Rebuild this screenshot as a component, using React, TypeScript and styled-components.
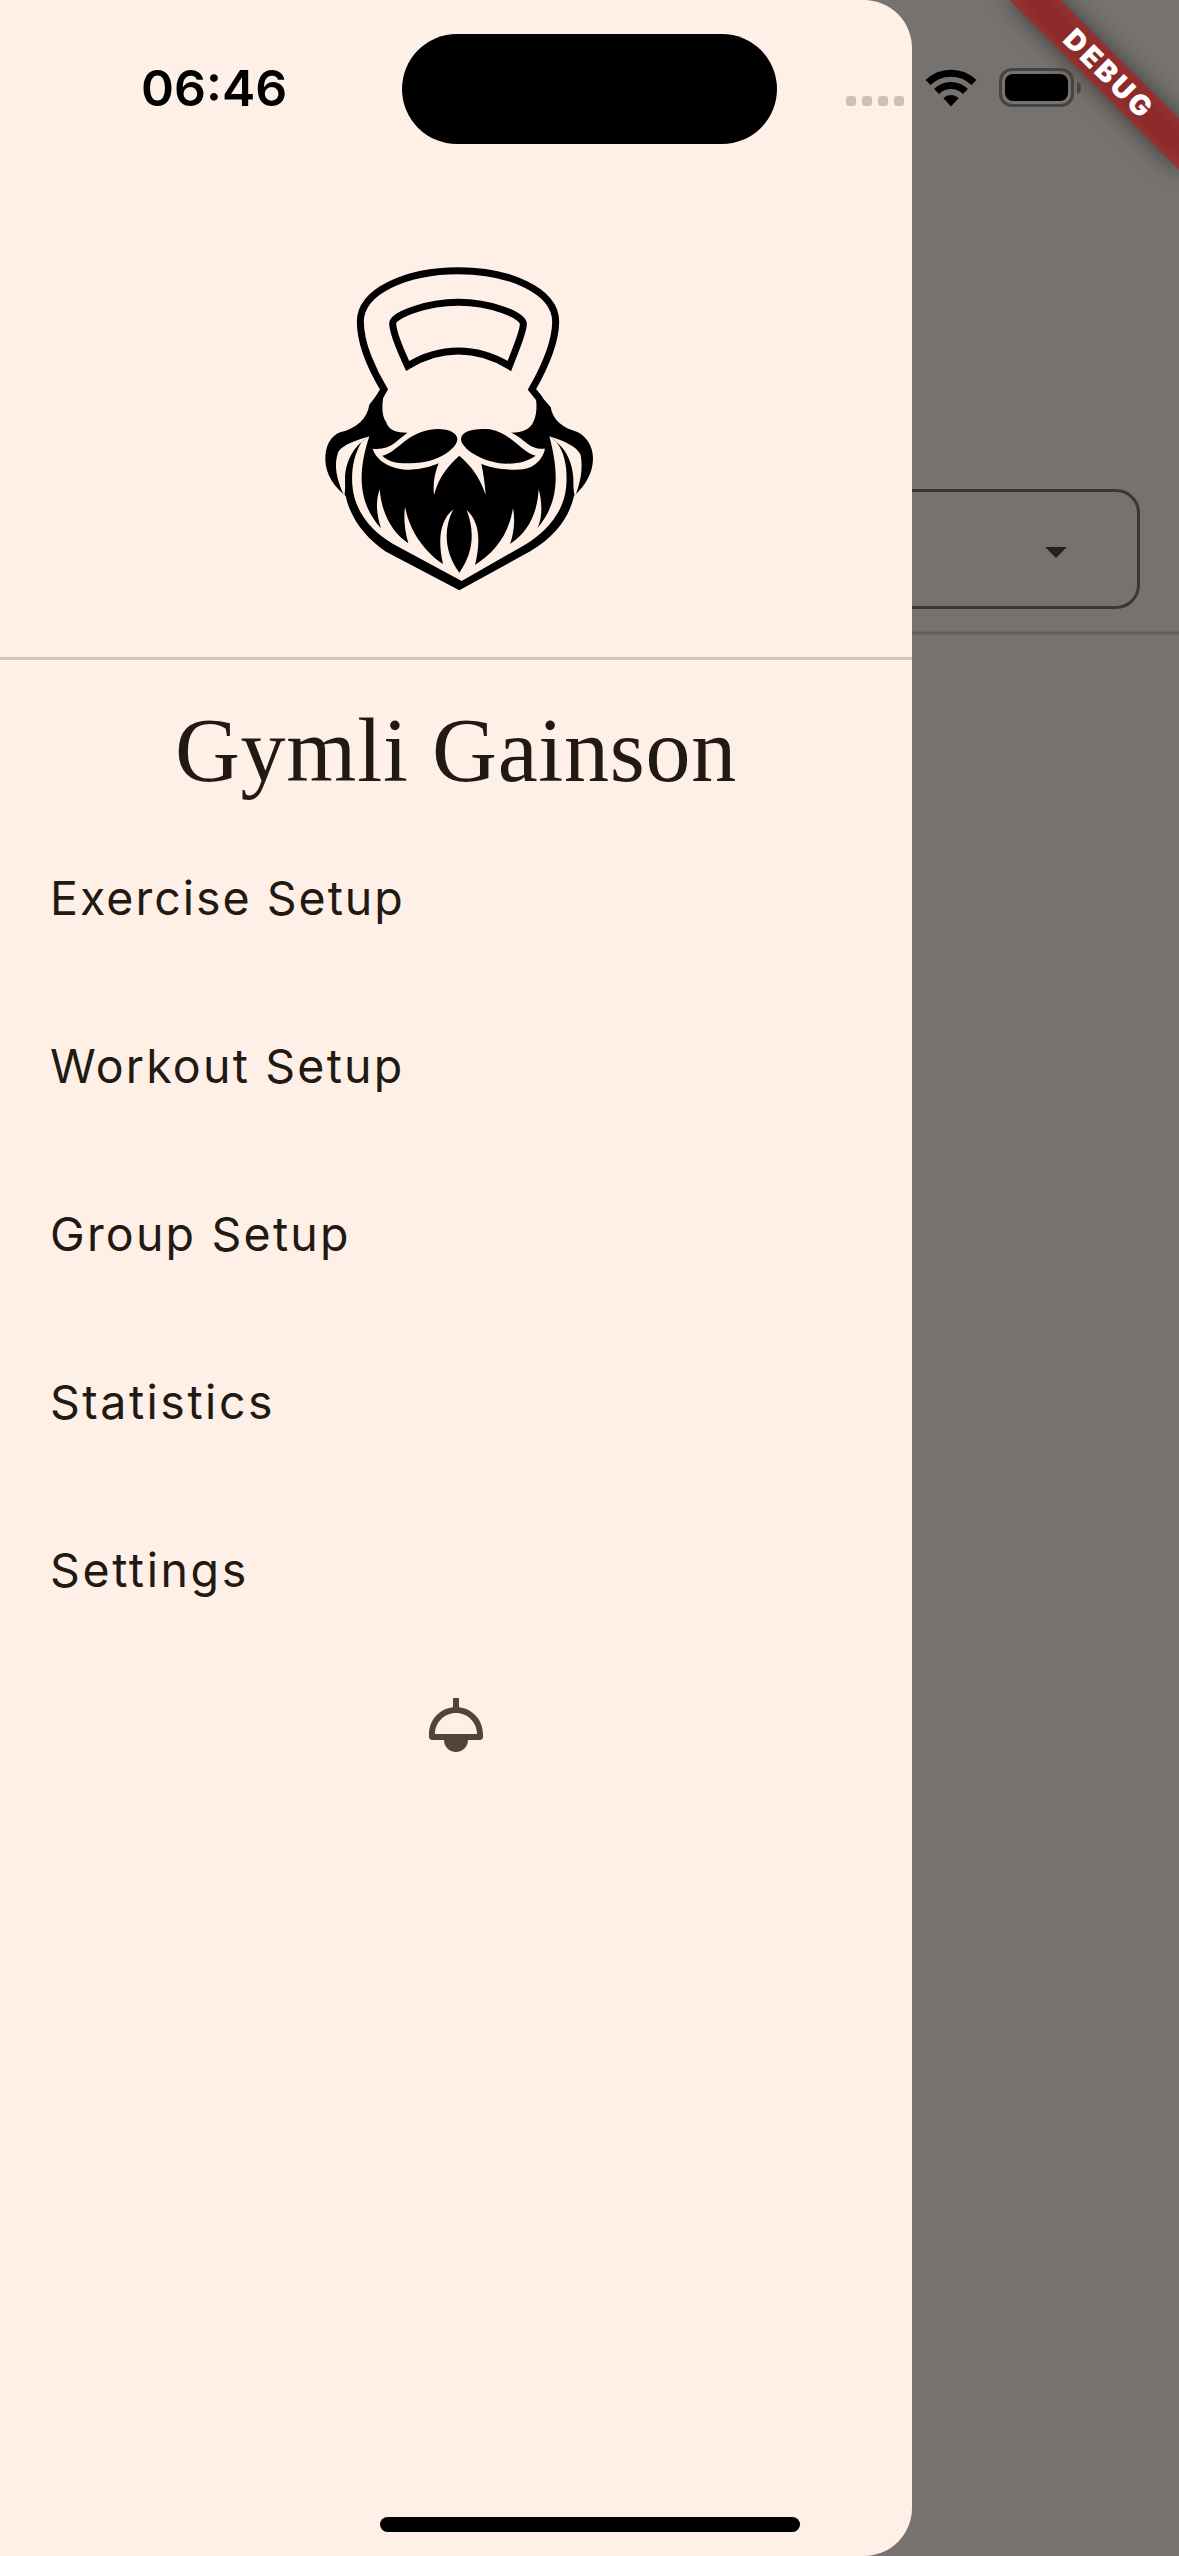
import React from "react";
import styled, { createGlobalStyle } from "styled-components";

const surface = "#fff0e7";

const GlobalStyle = createGlobalStyle`
  * { box-sizing: border-box; }
  body { margin: 0; font-family: Inter, "Liberation Sans", sans-serif; }
`;

const Screen = styled.div`
  position: relative;
  width: 1179px;
  height: 2556px;
  overflow: hidden;
  background: #76726f;
`;

const Page = styled.main`
  display: flex;
  flex-direction: column;
  padding-top: 489px;
`;

const SelectBox = styled.div`
  display: flex;
  align-items: center;
  justify-content: flex-end;
  height: 120px;
  margin: 0 39px 23px;
  padding: 7px 70px 0 0;
  border: 3px solid #3f362f;
  border-radius: 24px;
`;

const PageDivider = styled.div`
  height: 2px;
  background: #665b53;
  box-shadow: 0 0 0 1px #706863;
`;

const Drawer = styled.aside`
  position: absolute;
  top: 0;
  left: 0;
  display: flex;
  flex-direction: column;
  width: 912px;
  height: 100%;
  border-radius: 0 48px 48px 0;
  background: ${surface};
`;

const DrawerHeader = styled.header`
  display: flex;
  justify-content: center;
  height: 660px;
  padding: 250px 0 0 8px;
  border-bottom: 3px solid #d6c3b5;
`;

const Title = styled.h1`
  margin: 0;
  height: 155px;
  padding-top: 39px;
  text-align: center;
  font: 400 90px/104px "Liberation Serif", "Times New Roman", serif;
  letter-spacing: 0.75px;
  color: #211a13;
`;

const Menu = styled.nav`
  display: flex;
  flex-direction: column;
`;

const MenuItem = styled.a<{ $tracking: number }>`
  display: flex;
  align-items: center;
  height: 168px;
  padding: 0 0 3px 50px;
  font-size: 46.5px;
  line-height: 60px;
  letter-spacing: ${(p) => p.$tracking}px;
  color: #211a13;
`;

const ThemeButton = styled.button`
  align-self: center;
  display: flex;
  margin-top: 34px;
  padding: 0;
  border: 0;
  background: none;
  color: #52443a;
`;

const StatusBar = styled.div`
  position: absolute;
  inset: 0 0 auto 0;
  display: flex;
  align-items: flex-start;
  height: 177px;
`;

const Clock = styled.time`
  width: 402px;
  padding: 58px 0 0 141px;
  font-size: 50px;
  font-weight: 600;
  line-height: 60px;
  letter-spacing: 0;
  color: #000;
`;

const Island = styled.div`
  width: 375px;
  height: 110px;
  margin-top: 34px;
  border-radius: 55px;
  background: #000;
`;

const SignalDots = styled.div`
  display: flex;
  gap: 6px;
  margin: 96px 0 0 69px;
`;

const Dot = styled.i`
  width: 10px;
  height: 10px;
  border-radius: 3px;
  background: #ccc0b8;
`;

const WifiSlot = styled.div`
  display: flex;
  margin: 68px 0 0 21px;
`;

const Battery = styled.div`
  display: flex;
  width: 75px;
  height: 39px;
  margin: 68px 0 0 22px;
  padding: 3px;
  border: 3px solid #464442;
  border-radius: 13px;
`;

const BatteryLevel = styled.div`
  flex: 1;
  border-radius: 8px;
  background: #000;
`;

const BatteryCap = styled.div`
  width: 4px;
  height: 12px;
  margin: 82px 0 0 3px;
  border-radius: 0 4px 4px 0 / 0 6px 6px 0;
  background: #464442;
`;

const HomeIndicator = styled.div`
  position: absolute;
  left: 380px;
  bottom: 24px;
  width: 420px;
  height: 15px;
  border-radius: 8px;
  background: #000;
`;

const BannerPivot = styled.div`
  position: absolute;
  top: 0;
  left: 1179px;
  width: 0;
  height: 0;
  transform: rotate(45deg);
`;

const BannerShadow = styled.div`
  position: absolute;
  top: 84px;
  left: -120px;
  width: 240px;
  height: 36px;
  background: rgba(0, 0, 0, 0.5);
  filter: blur(12px);
`;

const BannerRibbon = styled.div`
  position: absolute;
  top: 84px;
  left: -120px;
  display: flex;
  align-items: center;
  justify-content: center;
  width: 240px;
  height: 36px;
  padding-left: 6px;
  background: rgba(183, 28, 28, 0.627);
  color: #fff;
  font-size: 28.5px;
  font-weight: 900;
  line-height: 36px;
  letter-spacing: 3px;
`;

const LowerFace = "M228 515C235 540 260 548 292 548C262 570 240 602 188 596C200 638 255 660 300 659C335 658 362 650 386 640C374 670 368 700 372 735C388 675 418 645 448 617C482 647 508 678 527 735C525 700 520 670 514 641C545 655 600 662 640 658C675 652 700 625 705 596C655 600 645 565 603 548C640 548 662 535 670 515C680 495 681 470 678 448L666 400H222L219 448C215 475 217 500 228 515Z";

function KettlebellBeard() {
  return (
    <svg width="300" height="360" viewBox="0 0 900 1080">
      <path d="M213 418L178 464C172 505 140 535 90 547C60 560 46 588 46 628C46 675 75 712 107 738C122 808 170 866 228 905L448 1021L662 903C738 858 778 800 792 738C828 705 849 668 849 625C849 585 825 555 800 545C760 535 728 510 722 472L676 418L640 470H250Z" fill="#000" />
      <g fill={surface}>
        <path d={LowerFace} />
        <path d="M178 559C140 571 100 583 85 605C70 645 80 690 103 738C107 715 105 705 105 680C107 640 125 602 152 578Z" />
        <path d="M718 559C760 573 800 588 812 615C820 660 810 700 795 740C790 725 790 705 790 685C788 640 770 602 742 578Z" />
        <path d="M178 559L154 577C130 620 124 662 127 705C132 778 178 840 248 881L455 993L640 887C705 850 760 790 768 715C773 665 768 615 740 577L718 559C746 665 750 755 682 835C700 800 695 750 686 718C682 795 650 850 600 882C612 850 616 810 609 774C595 860 550 910 495 945C513 870 508 815 470 780C493 840 493 905 448 968C402 905 400 835 430 778C385 815 385 880 399 942C350 910 300 850 285 770C281 800 283 840 295 880C250 850 215 795 209 718C198 750 197 785 213 835C140 755 145 660 178 559Z" />
      </g>
      <g fill="#000">
        <path d="M217 617C262 607 285 552 360 539C402 532 442 543 442 568C442 592 390 640 300 640C262 641 235 635 217 617Z" />
        <path d="M677 617C632 606 608 552 540 538C495 533 453 542 453 568C453 595 520 641 590 641C630 641 655 632 677 617Z" />
      </g>
      <g fill="none" stroke="#000" strokeWidth="21">
        <path d="M206 446L222 418C190 365 151 283 151 215C151 122 292 62 445 62C598 62 737 122 737 215C737 283 700 358 666 418L690 448" />
        <path d="M293 348C272 303 248 250 248 220C248 195 350 157 445 157C540 157 640 195 640 222C640 248 616 300 598 348C500 288 390 288 293 348Z" />
      </g>
    </svg>
  );
}

function LampIcon() {
  return (
    <svg width="72" height="72" viewBox="0 0 24 24" fill="currentColor">
      <path d="M13 6.06V3h-2v3.06C6.5 6.55 3 10.37 3 15v1c0 .55.45 1 1 1h4c0 2.21 1.79 4 4 4s4-1.79 4-4h4c.55 0 1-.45 1-1v-1c0-4.63-3.5-8.45-8-8.94zM12 8c3.87 0 7 3.13 7 7H5c0-3.87 3.13-7 7-7z" />
    </svg>
  );
}

function WifiIcon() {
  return (
    <svg width="52" height="40" viewBox="0 0 52 40">
      <g fill="none" stroke="#000" strokeWidth="7">
        <path d="M3 14.5A33 33 0 0 1 49 14.5" />
        <path d="M11.6 23.5A20.5 20.5 0 0 1 40.4 23.5" />
      </g>
      <path d="M18.3 30A11.5 11.5 0 0 1 33.7 30L26 38.4Z" fill="#000" />
    </svg>
  );
}

const items = [
  { label: "Exercise Setup", tracking: 2 },
  { label: "Workout Setup", tracking: 2.2 },
  { label: "Group Setup", tracking: 2.2 },
  { label: "Statistics", tracking: 2.5 },
  { label: "Settings", tracking: 2.6 },
];

export default function App() {
  return (
    <>
      <GlobalStyle />
      <Screen>
        <Page>
          <SelectBox>
            <svg width="22" height="11" viewBox="0 0 22 11"><path d="M0 0H22L11 11Z" fill="#26201b" /></svg>
          </SelectBox>
          <PageDivider />
        </Page>
        <Drawer>
          <DrawerHeader><KettlebellBeard /></DrawerHeader>
          <Title>Gymli Gainson</Title>
          <Menu>
            {items.map(({ label, tracking }) => (
              <MenuItem key={label} $tracking={tracking}>{label}</MenuItem>
            ))}
          </Menu>
          <ThemeButton aria-label="Toggle theme"><LampIcon /></ThemeButton>
        </Drawer>
        <BannerPivot>
          <BannerShadow />
          <BannerRibbon>DEBUG</BannerRibbon>
        </BannerPivot>
        <StatusBar>
          <Clock>06:46</Clock>
          <Island />
          <SignalDots><Dot /><Dot /><Dot /><Dot /></SignalDots>
          <WifiSlot><WifiIcon /></WifiSlot>
          <Battery><BatteryLevel /></Battery>
          <BatteryCap />
        </StatusBar>
        <HomeIndicator />
      </Screen>
    </>
  );
}
